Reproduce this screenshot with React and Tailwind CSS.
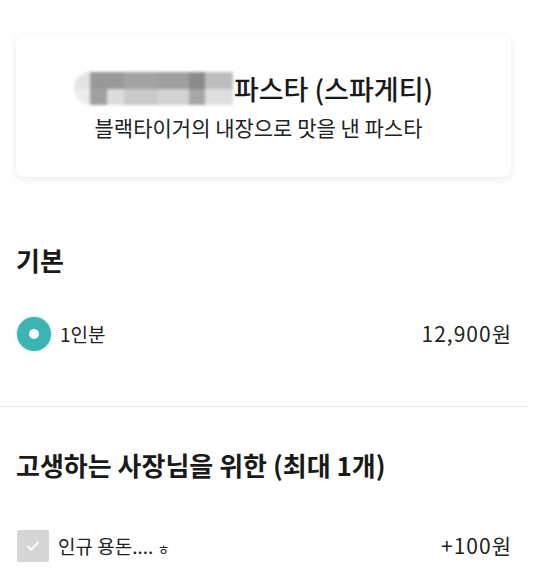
import React from "react";

const font = { fontFamily: '"Noto Sans CJK KR", "Noto Sans", sans-serif' };

function BlurredName() {
  // mosaic-blurred part of the menu name
  return (
    <div className="relative mr-[1px] flex h-[33px] w-[159px] overflow-hidden rounded-l-full rounded-r-[14px] blur-[1.5px]">
      <div className="flex h-full w-full flex-col">
        <div className="flex h-1/2">
          <div className="w-[16px] bg-[#e4e4e4]" />
          <div className="w-[34px] bg-[#999]" />
          <div className="w-[33px] bg-[#a3a3a3]" />
          <div className="w-[32px] bg-[#9e9e9e]" />
          <div className="w-[16px] bg-[#8a8a8a]" />
          <div className="w-[28px] bg-[#bdbdbd]" />
        </div>
        <div className="flex h-1/2">
          <div className="w-[16px] bg-[#ececec]" />
          <div className="w-[17px] bg-[#a0a0a0]" />
          <div className="w-[17px] bg-[#dcdcdc]" />
          <div className="w-[33px] bg-[#c9c9c9]" />
          <div className="w-[32px] bg-[#d2d2d2]" />
          <div className="w-[16px] bg-[#a6a6a6]" />
          <div className="w-[28px] bg-[#dedede]" />
        </div>
      </div>
    </div>
  );
}

function OptionRow({ control, label, price }) {
  return (
    <div className="flex h-[34px] items-center justify-between pl-[1px]">
      <div className="flex items-center gap-[9px]">
        {control}
        <span className="text-[19px] text-[#222]">{label}</span>
      </div>
      <span className="-mr-[1px] text-[21px] tracking-[1px] text-[#222]">{price}</span>
    </div>
  );
}

export default function App() {
  return (
    <div className="min-h-screen w-[534px] overflow-hidden bg-white" style={font}>
      <div className="px-4 pt-[35px] pr-[23px]">
        {/* menu card */}
        <div className="flex h-[142px] flex-col items-center justify-center rounded-lg bg-white pr-[10px] shadow-[0_2px_8px_rgba(0,0,0,0.09)]">
          <div className="flex items-center pr-[10px]">
            <BlurredName />
            <span className="text-[27px] font-medium leading-[36px] text-[#1a1a1a]">파스타 (스파게티)</span>
          </div>
          <p className="mt-[5px] text-[21px] leading-[30px] text-[#222]">블랙타이거의 내장으로 맛을 낸 파스타</p>
        </div>

        {/* 기본 */}
        <h2 className="mt-[67px] text-[26px] font-bold leading-[32px] text-[#1a1a1a]">기본</h2>
        <div className="mt-[41px]">
          <OptionRow
            control={
              <div className="h-[34px] w-[34px] rounded-full border-[12px] border-[#3cb4b4] bg-white shadow-[0_0_3px_rgba(60,180,180,0.5)]" />
            }
            label="1인분"
            price="12,900원"
          />
        </div>
      </div>

      <div className="mt-[55px] mr-[6px] h-[1px] bg-[#ebebeb]" />

      <div className="px-4 pr-[23px]">
        <h2 className="mt-[42px] text-[26px] font-bold leading-[32px] text-[#1a1a1a]">고생하는 사장님을 위한 (최대 1개)</h2>
        <div className="mt-[48px]">
          <OptionRow
            control={
              <div className="flex h-[32px] w-[32px] items-center justify-center rounded-[2px] bg-[#d6d6d6]">
                <svg width="16" height="16" viewBox="0 0 16 16" fill="none">
                  <path d="M3 8.5l3.2 3L13 4.5" stroke="white" strokeWidth="2" strokeLinecap="round" strokeLinejoin="round" />
                </svg>
              </div>
            }
            label={
              <>
                인규 용돈.... <span className="text-[13px]">ㅎ</span>
              </>
            }
            price="+100원"
          />
        </div>
      </div>
    </div>
  );
}
